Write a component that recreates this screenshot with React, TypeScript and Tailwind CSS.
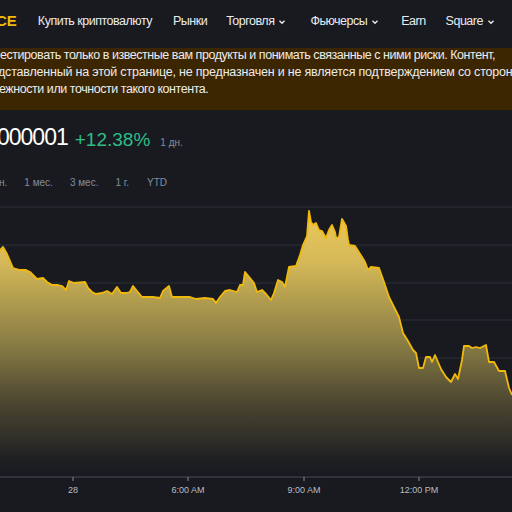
import React from "react"

const pts: [number, number][] = [
  [0, 250], [3, 247], [7, 254], [13, 268], [20, 270], [26, 270], [30, 272], [34, 276], [37, 279], [43, 278],
  [47, 282], [52, 285], [58, 285], [62, 286], [66, 290], [69, 281], [74, 283], [85, 282], [88, 288], [92, 292],
  [96, 294], [102, 293], [107, 291], [112, 294], [117, 287], [121, 293], [126, 293], [130, 292], [133, 286],
  [137, 291], [142, 297], [147, 297], [153, 297], [160, 298], [163, 291], [169, 286], [172, 297], [180, 297],
  [190, 297], [196, 299], [205, 298], [213, 299], [216, 303], [220, 297], [225, 291], [230, 290], [237, 292],
  [240, 285], [243, 285], [245, 272], [250, 278], [254, 283], [257, 292], [262, 290], [266, 294], [271, 300],
  [274, 293], [278, 280], [282, 282], [285, 287], [289, 267], [296, 266], [300, 255], [303, 245], [307, 236],
  [309, 211], [311, 222], [313, 225], [316, 223], [319, 230], [322, 231], [326, 238], [329, 230], [332, 225],
  [335, 232], [336, 238], [339, 237], [342, 219], [346, 226], [348, 240], [349, 245], [355, 246], [362, 257],
  [365, 262], [368, 270], [371, 267], [379, 268], [384, 282], [389, 297], [394, 307], [399, 317], [403, 333],
  [408, 341], [413, 350], [416, 353], [419, 368], [423, 368], [426, 357], [430, 357], [432, 362], [435, 355],
  [438, 362], [441, 369], [446, 377], [451, 382], [455, 374], [458, 379], [462, 360], [464, 346], [469, 346],
  [472, 348], [476, 347], [480, 348], [486, 345], [489, 362], [494, 362], [499, 371], [505, 371], [509, 388],
  [512, 395],
]

const line = pts.map(([x, y], i) => `${i ? "L" : "M"}${x},${y}`).join(" ")
const area = `${line} L512,477 L0,477 Z`

const nav = [
  { label: "Купить криптовалюту", gap: "ml-[21px]" },
  { label: "Рынки", gap: "ml-[21px]" },
  { label: "Торговля", chevron: true, gap: "ml-[19px]" },
  { label: "Фьючерсы", chevron: true, gap: "ml-[24px]" },
  { label: "Earn", gap: "ml-[22px]" },
  { label: "Square", chevron: true, gap: "ml-[20px]" },
]

const Chevron = () => (
  <svg width="8" height="8" viewBox="0 0 8 8" className="ml-[4px] mt-[2px]">
    <path d="M1.5 2.8 L4 5.2 L6.5 2.8" fill="none" stroke="#eaecef" strokeWidth="1.4" />
  </svg>
)

export default function App() {
  return (
    <div className="w-[512px] h-[512px] overflow-hidden bg-[#181a20] text-[#eaecef]" style={{ fontFamily: '"Liberation Sans", Arial, sans-serif' }}>
      <header className="h-[42px] flex items-center">
        <div className="text-[#f0b90b] font-bold text-[15px] -ml-[4px]">CE</div>
        <nav className="flex items-center text-[12.5px] tracking-[-0.5px]">
          {nav.map(n => (
            <div key={n.label} className={`flex items-center whitespace-nowrap ${n.gap}`}>
              {n.label}
              {n.chevron && <Chevron />}
            </div>
          ))}
        </nav>
      </header>

      <div className="mt-[6px] h-[62px] bg-[#3c2601] text-[12.5px] tracking-[-0.45px] leading-[17px] whitespace-nowrap overflow-hidden">
        <div className="-mt-[1px]">естировать только в известные вам продукты и понимать связанные с ними риски. Контент,</div>
        <div className="-ml-[2px] tracking-[-0.2px]">дставленный на этой странице, не предназначен и не является подтверждением со стороны Binance</div>
        <div className="-ml-[1px]">ежности или точности такого контента.</div>
      </div>

      <div className="h-[50px] flex items-end pb-[11px] -ml-[3px]">
        <span className="text-[23px] leading-none text-white tracking-[-1px]">000001</span>
        <span className="ml-[7px] text-[19px] leading-none font-medium text-[#2ebd85]">+12.38%</span>
        <span className="ml-[10px] text-[10px] leading-none text-[#848e9c] mb-[1px]">1 дн.</span>
      </div>

      <div className="h-[40px] flex items-start pt-[15px] text-[10px] text-[#848e9c] -ml-[1px]">
        <span>н.</span>
        <span className="ml-[17px]">1 мес.</span>
        <span className="ml-[17px]">3 мес.</span>
        <span className="ml-[17px]">1 г.</span>
        <span className="ml-[18px]">YTD</span>
      </div>

      <svg width="512" height="312" viewBox="0 200 512 312" className="block">
        <defs>
          <linearGradient id="fill" x1="0" y1="207" x2="0" y2="477" gradientUnits="userSpaceOnUse">
            <stop offset="0" stopColor="#ecca5c" />
            <stop offset="0.2" stopColor="#d6b958" />
            <stop offset="0.5" stopColor="#8a7e45" />
            <stop offset="0.72" stopColor="#4d4731" />
            <stop offset="0.94" stopColor="#1e1f22" />
            <stop offset="1" stopColor="#181a20" />
          </linearGradient>
        </defs>
        {[207, 245, 283, 320, 358, 396, 434].map(y => (
          <line key={y} x1="0" x2="512" y1={y} y2={y} stroke="#2b2f36" strokeWidth="1" />
        ))}
        <path d={area} fill="url(#fill)" />
        <path d={line} fill="none" stroke="#f0b90b" strokeWidth="1.8" strokeLinejoin="round" />
        <line x1="0" x2="512" y1="477" y2="477" stroke="#474d57" strokeWidth="1" />
        {[
          { x: 73, t: "28" },
          { x: 188, t: "6:00 AM" },
          { x: 304, t: "9:00 AM" },
          { x: 419, t: "12:00 PM" },
        ].map(l => (
          <g key={l.t}>
            <line x1={l.x} x2={l.x} y1="477" y2="481" stroke="#848e9c" strokeWidth="1" />
            <text x={l.x} y="493" textAnchor="middle" fontSize="9" fill="#b7bdc6" fontFamily="Liberation Sans, Arial, sans-serif">{l.t}</text>
          </g>
        ))}
      </svg>
    </div>
  )
}
